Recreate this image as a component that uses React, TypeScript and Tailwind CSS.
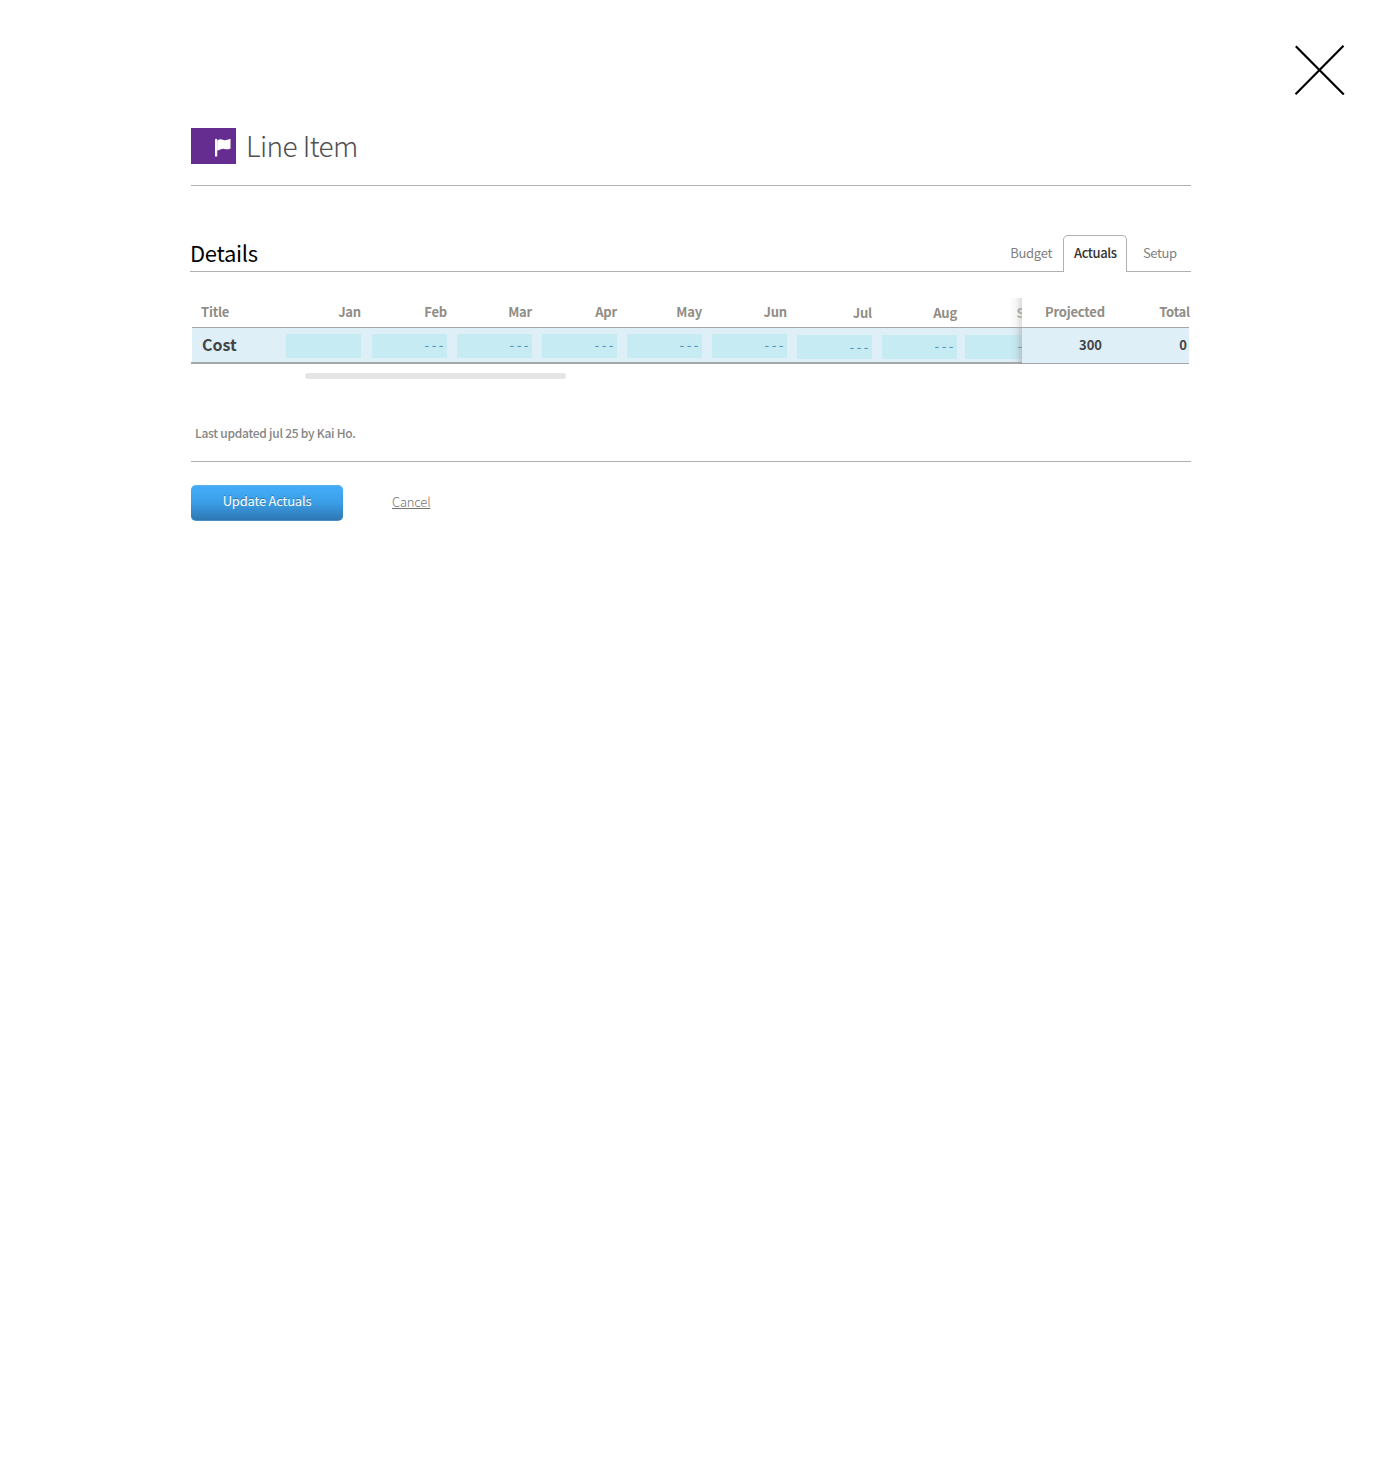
const months = [
  { name: "Jan", value: "", column: "w-[75px]", drop: "", line: "leading-[22px]" },
  { name: "Feb", value: "---", column: "ml-[11px] w-[75px]", drop: "", line: "leading-[22px]" },
  { name: "Mar", value: "---", column: "ml-[10px] w-[75px]", drop: "", line: "leading-[22px]" },
  { name: "Apr", value: "---", column: "ml-[10px] w-[75px]", drop: "", line: "leading-[22px]" },
  { name: "May", value: "---", column: "ml-[10px] w-[75px]", drop: "", line: "leading-[22px]" },
  { name: "Jun", value: "---", column: "ml-[10px] w-[75px]", drop: "", line: "leading-[22px]" },
  { name: "Jul", value: "---", column: "ml-[10px] w-[75px]", drop: "pt-px", line: "leading-[24px]" },
  { name: "Aug", value: "---", column: "ml-[10px] w-[75px]", drop: "pt-px", line: "leading-[22px]" },
  { name: "Sep", value: "---", column: "ml-[8px] w-[75px]", drop: "pt-px", line: "leading-[22px]" },
];

function CloseIcon() {
  return (
    <svg width="50" height="51" viewBox="0 0 50 51" fill="none" stroke="#000" strokeWidth="2.2">
      <path d="M0.8 1.2 48.8 49.6M48.5 0.8 0.5 49.2" />
    </svg>
  );
}

function FlagIcon() {
  return (
    <svg width="17" height="19" viewBox="0 0 17 19" fill="#fff">
      <path d="M0 1.8Q0 .8 1.1 .8T2.2 1.8V18.4H0Z" />
      <path d="M2.2 2.4C4.500 .8 6.500 1.300 8.500 1.900S12.500 1.900 15.500 .8V10.400C13 11.600 11.500 11.200 9 10.900S5 11.900 2.200 12.900Z" />
    </svg>
  );
}

export default function App() {
  return (
    <div className="h-[1477px] w-[1381px] overflow-hidden bg-white font-['Noto_Sans_CJK_SC',sans-serif] whitespace-nowrap text-[#7f7f7f]">
      <div className="flex h-[128px] justify-end pt-[45px] pr-[36px]">
        <button className="h-[51px]" aria-label="Close">
          <CloseIcon />
        </button>
      </div>

      <main className="ml-[191px] w-[1000px]">
        <header className="flex h-[58px] items-start border-b border-[#b0b0b0]">
          <div className="flex h-[36px] w-[45px] justify-end bg-[#662d91] pt-[10px] pr-[4px]">
            <FlagIcon />
          </div>
          <h1 className="ml-[10px] text-[28px] leading-[34px] font-light tracking-[-0.6px] text-[#505050]">Line Item</h1>
        </header>

        <div className="-ml-px flex h-[86px] items-end">
          <div className="flex h-[37px] w-[873px] justify-between border-b border-[#b0b0b0] pr-[11px]">
            <h2 className="text-[22px] leading-[34px] tracking-[-0.3px] text-black">Details</h2>
            <span className="text-[13px] leading-[36px] tracking-[-0.3px]">Budget</span>
          </div>
          <div className="h-[37px] w-[64px] rounded-t-[5px] border border-b-0 border-[#b0b0b0] pl-[10px] text-[13px] leading-[34px] font-medium tracking-[-0.4px] text-[#333]">
            Actuals
          </div>
          <div className="h-[37px] w-[64px] border-b border-[#b0b0b0] pl-[16px] text-[13px] leading-[36px] tracking-[-0.4px]">Setup</div>
        </div>

        <section className="mt-[25px] flex h-[67px] text-[13px] font-bold tracking-[-0.2px] text-[#8f8d86]">
          <div className="relative w-[831px] overflow-hidden">
            <div className="flex h-[30px] leading-[30px]">
              <div className="w-[95px] shrink-0 pl-[10px]">Title</div>
              {months.map((m) => (
                <div key={m.name} className={`shrink-0 text-right ${m.column} ${m.drop}`}>
                  {m.name}
                </div>
              ))}
            </div>
            <div className="ml-px h-[35px] border-t border-[#a3a7a9] bg-[#dfeff8]">
              <div className="flex pt-[6px]">
                <div className="w-[94px] shrink-0 pl-[10px] text-[16px] leading-[21px] tracking-normal text-[#444]">Cost</div>
                {months.map((m) => (
                  <div key={m.name} className={`shrink-0 ${m.column} ${m.drop}`}>
                    <div className={`h-[24px] bg-[#c6ebf3] pr-px text-right font-medium tracking-[2.5px] text-[#5597bf] ${m.line}`}>
                      {m.value}
                    </div>
                  </div>
                ))}
              </div>
            </div>
            <div className="h-[2px] bg-[#a5a7a8]" />
            <div className="absolute top-px right-0 bottom-0 w-[12px] bg-linear-to-r from-[#999]/0 via-[#999]/10 to-[#999]/45" />
            <div className="absolute top-px right-0 h-[29px] w-[7px] bg-linear-to-r from-white/10 to-white/30" />
          </div>
          <div className="w-[169px]">
            <div className="flex h-[30px] justify-between pr-px pl-[23px] leading-[30px]">
              <span>Projected</span>
              <span>Total</span>
            </div>
            <div className="flex h-[37px] w-[167px] justify-between border-y border-[#a3a7a9] bg-[#dfeff8] pr-[2px] pl-[57px] leading-[34px] tracking-normal text-[#444]">
              <span>300</span>
              <span>0</span>
            </div>
          </div>
        </section>

        <div className="mt-[9px] ml-[114px] h-[6px] w-[261px] rounded-[3px] bg-[#e5e5e5]" />

        <div className="h-[83px] border-b border-[#b0b0b0] pt-[44px] pl-[4px] text-[12px] leading-[20px] font-medium tracking-[-0.26px] text-[#858585]">
          Last updated jul 25 by Kai Ho.
        </div>

        <div className="mt-[23px] flex text-[13px]">
          <button className="flex h-[36px] w-[152px] justify-center rounded-[5px] border-y border-t-[#5db4f2] border-b-[#4a90c8] bg-linear-to-b from-[#41a9f5] from-15% via-[#3b9de6] via-50% to-[#2d78b3] leading-[30px] tracking-[-0.22px] text-white [text-shadow:0_-1px_0_rgba(0,0,0,0.3)]">
            Update Actuals
          </button>
          <a className="ml-[49px] leading-[34px] font-light tracking-[-0.2px] text-[#77756c] underline">Cancel</a>
        </div>
      </main>
    </div>
  );
}
